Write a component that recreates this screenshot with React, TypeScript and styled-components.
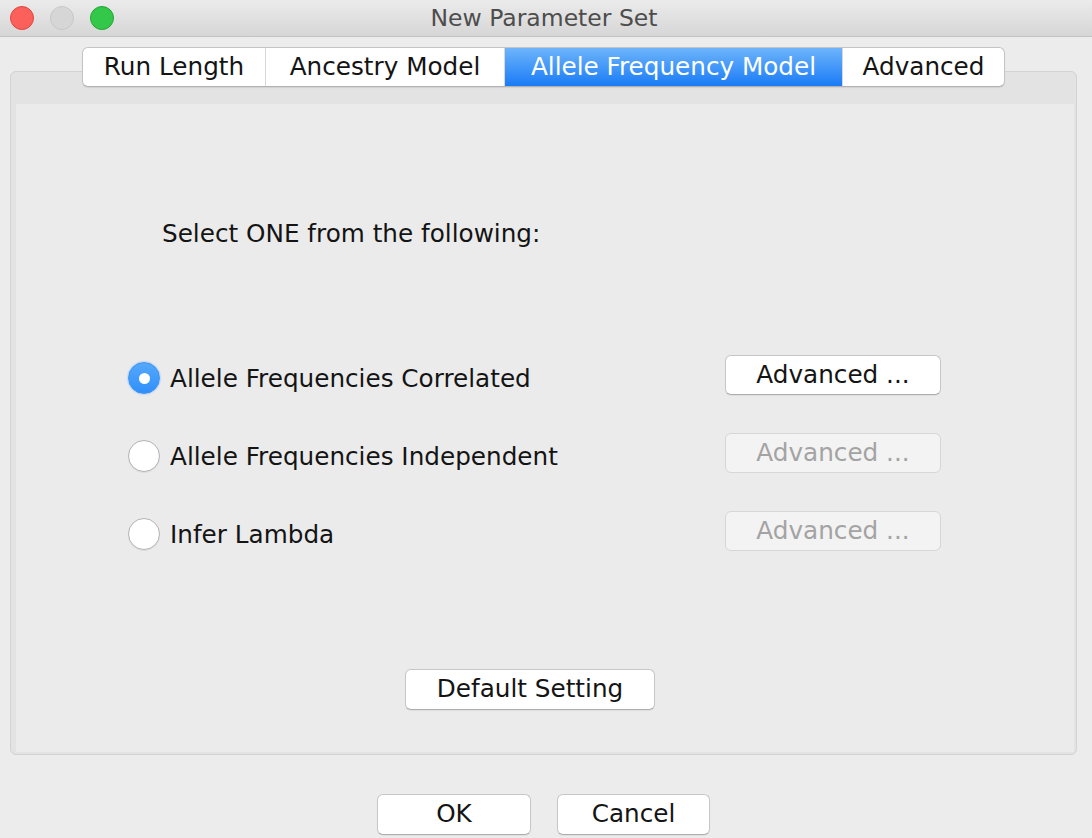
import React, { useState } from 'react'
import styled, { createGlobalStyle } from 'styled-components'

const GlobalStyle = createGlobalStyle`
    html, body {
        margin: 0;
        padding: 0;
        background: #ececec;
    }
    body {
        font-family: 'DejaVu Sans', 'Liberation Sans', sans-serif;
        -webkit-font-smoothing: antialiased;
    }
    * {
        box-sizing: border-box;
    }
`

const Window = styled.div`
    width: 1092px;
    height: 838px;
    overflow: hidden;
    background: #ececec;
    color: #141414;
    font-size: 24.7px;
`

const TitleBar = styled.div`
    height: 37px;
    display: grid;
    grid-template-columns: 1fr auto 1fr;
    align-items: center;
    background: linear-gradient(#ebebeb, #d6d6d6);
    border-bottom: 1px solid #c2c2c2;
`

const Lights = styled.div`
    display: flex;
    gap: 16px;
    padding-left: 10px;
`

const Light = styled.span<{ color: string; edge: string }>`
    width: 24px;
    height: 24px;
    border-radius: 50%;
    background: ${(p) => p.color};
    border: 1px solid ${(p) => p.edge};
`

const Title = styled.div`
    font-size: 23.5px;
    color: #4d4d4d;
    padding-right: 4px;
`

const Body = styled.div`
    padding: 10px 15px 0 10px;
`

const TabStrip = styled.div`
    display: flex;
    justify-content: center;
    position: relative;
    z-index: 1;
    margin-bottom: -16px;
`

const TabGroup = styled.div`
    display: flex;
    height: 40px;
    background: #ffffff;
    border: 1px solid #c4c4c4;
    border-bottom-color: #b2b2b2;
    border-radius: 6px;
    overflow: hidden;
    box-shadow: 0 1px 1px rgba(0, 0, 0, 0.08);
`

const Tab = styled.div<{ width: number; selected?: boolean }>`
    width: ${(p) => p.width}px;
    display: flex;
    align-items: center;
    justify-content: center;
    white-space: nowrap;
    padding-bottom: 1px;
    color: ${(p) => (p.selected ? '#ffffff' : '#141414')};
    background: ${(p) => (p.selected ? 'linear-gradient(#6db4fb, #1a7bf6)' : 'transparent')};
    & + & {
        border-left: 1px solid ${(p) => (p.selected ? '#4a98f8' : '#d8d8d8')};
    }
`

const Panel = styled.div`
    height: 684px;
    background: #e3e3e3;
    border: 1px solid #d3d3d3;
    border-radius: 6px;
    padding: 32px 2px 2px 5px;
`

const Inner = styled.div`
    height: 100%;
    background: #ebebeb;
    display: flex;
    flex-direction: column;
    padding-top: 115px;
`

const Prompt = styled.div`
    line-height: 30px;
    margin-left: 146px;
`

const Options = styled.div`
    margin-top: 90px;
    padding-left: 112px;
    display: flex;
    flex-direction: column;
`

const Row = styled.div`
    height: 78px;
    display: grid;
    grid-template-columns: 597px 216px;
    align-items: center;
`

const RadioLabel = styled.label`
    display: flex;
    align-items: center;
    gap: 10px;
    cursor: default;
    white-space: nowrap;
`

const Radio = styled.span<{ checked: boolean }>`
    width: 32px;
    height: 32px;
    border-radius: 50%;
    display: flex;
    align-items: center;
    justify-content: center;
    flex: none;
    background: ${(p) => (p.checked ? 'linear-gradient(#55a9fd, #2f8ff9)' : '#ffffff')};
    border: 1px solid ${(p) => (p.checked ? '#3a93f5' : '#b3b3b3')};
    box-shadow: ${(p) => (p.checked ? '0 0 2px rgba(40, 130, 250, 0.6)' : '0 1px 1px rgba(0, 0, 0, 0.06)')};
    &::after {
        content: '';
        display: ${(p) => (p.checked ? 'block' : 'none')};
        width: 11px;
        height: 11px;
        border-radius: 50%;
        background: #ffffff;
    }
`

const Button = styled.button<{ width: number; height?: number }>`
    width: ${(p) => p.width}px;
    height: ${(p) => p.height ?? 41}px;
    font-family: inherit;
    font-size: 24.7px;
    color: #141414;
    background: #ffffff;
    border: 1px solid #c6c6c6;
    border-bottom-color: #adadad;
    border-radius: 6px;
    box-shadow: 0 1px 1px rgba(0, 0, 0, 0.05);
    padding: 0 0 2px;
    &:disabled {
        color: #a3a3a3;
        background: #f3f3f3;
        border-color: #d6d6d6;
        box-shadow: none;
    }
`

const RowButton = styled(Button)`
    margin-bottom: 6px;
`

const DefaultButton = styled(Button)`
    margin-top: 96px;
    margin-left: 389px;
`

const Footer = styled.div`
    display: flex;
    justify-content: center;
    gap: 26px;
    margin-top: 39px;
`

const TABS = [
    { label: 'Run Length', width: 182 },
    { label: 'Ancestry Model', width: 239 },
    { label: 'Allele Frequency Model', width: 338 },
    { label: 'Advanced', width: 162 },
]

const MODELS = ['Allele Frequencies Correlated', 'Allele Frequencies Independent', 'Infer Lambda']

const App: React.FC = () => {
    const [tab] = useState(2)
    const [model, setModel] = useState(0)

    return (
        <Window>
            <GlobalStyle />
            <TitleBar>
                <Lights>
                    <Light color="#fc605b" edge="#e0443e" />
                    <Light color="#d6d6d6" edge="#c8c8c8" />
                    <Light color="#34c84a" edge="#22a634" />
                </Lights>
                <Title>New Parameter Set</Title>
                <div />
            </TitleBar>

            <Body>
                <TabStrip>
                    <TabGroup>
                        {TABS.map((t, i) => (
                            <Tab key={t.label} width={t.width} selected={i === tab}>
                                {t.label}
                            </Tab>
                        ))}
                    </TabGroup>
                </TabStrip>

                <Panel>
                    <Inner>
                        <Prompt>Select ONE from the following:</Prompt>

                        <Options>
                            {MODELS.map((m, i) => (
                                <Row key={m}>
                                    <RadioLabel onClick={() => setModel(i)}>
                                        <Radio checked={model === i} />
                                        {m}
                                    </RadioLabel>
                                    <RowButton width={216} height={40} disabled={model !== i}>
                                        Advanced ...
                                    </RowButton>
                                </Row>
                            ))}
                        </Options>

                        <DefaultButton width={250}>Default Setting</DefaultButton>
                    </Inner>
                </Panel>

                <Footer>
                    <Button width={154}>OK</Button>
                    <Button width={153}>Cancel</Button>
                </Footer>
            </Body>
        </Window>
    )
}

export default App
